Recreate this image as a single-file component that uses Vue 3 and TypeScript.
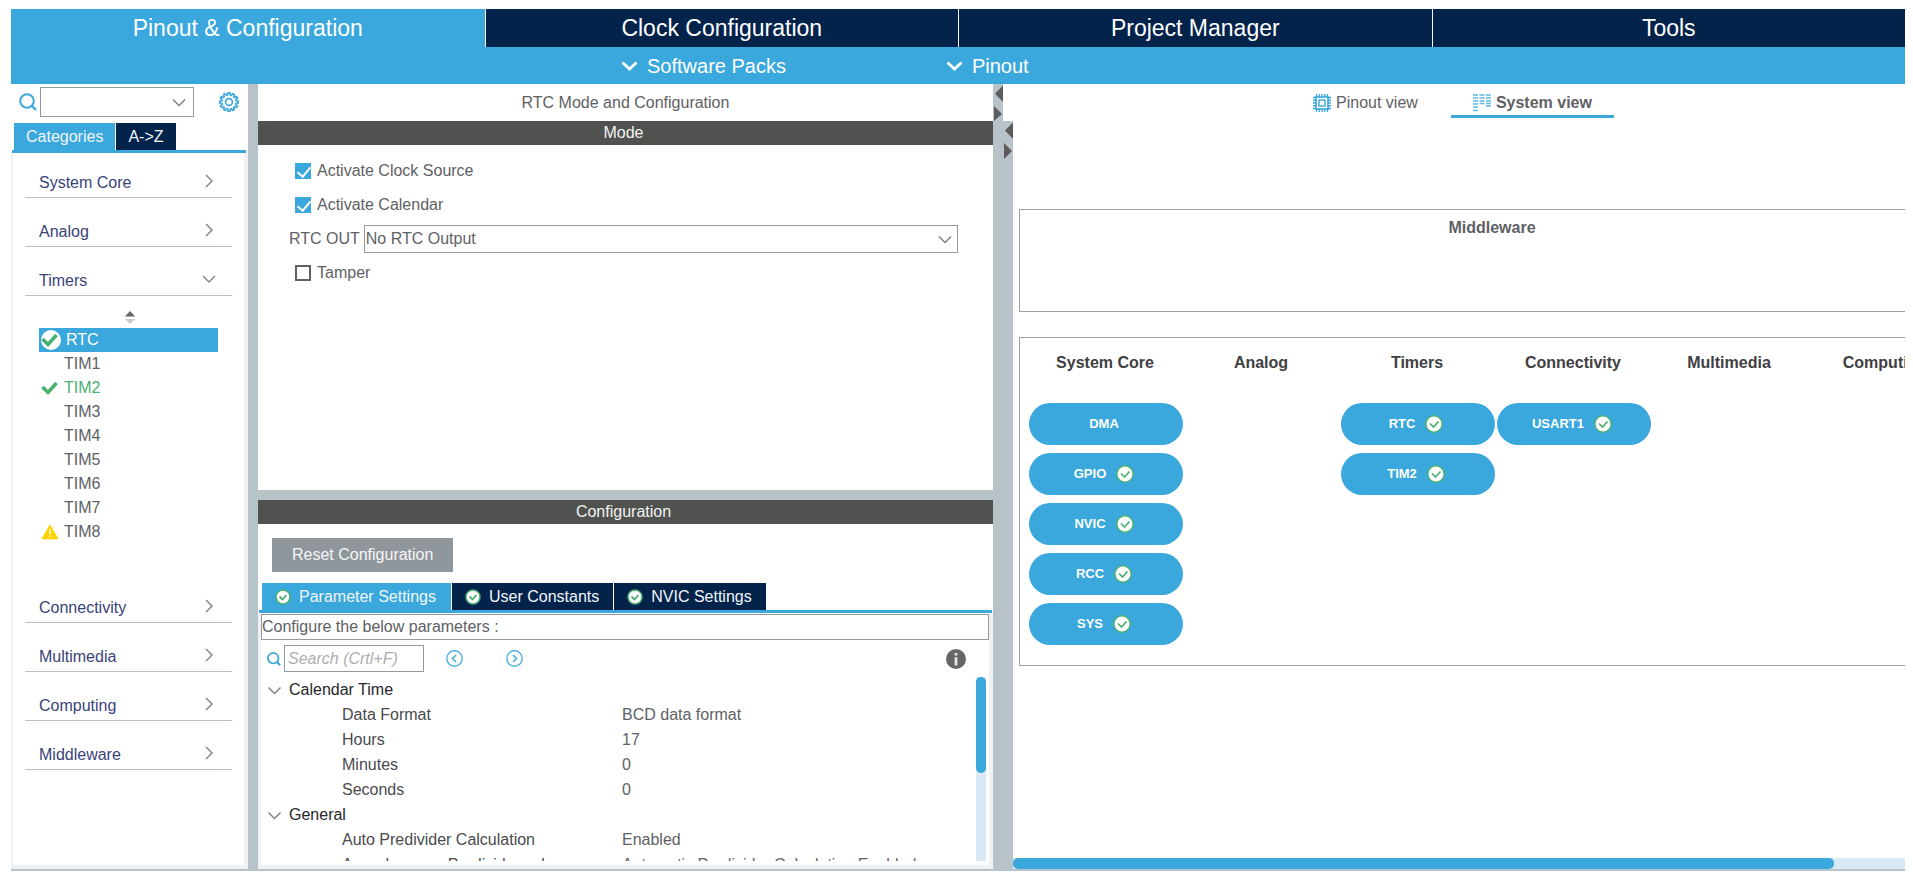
<script setup lang="ts">
import { ref } from 'vue'

type Status = 'ok' | 'warn' | ''

interface Peripheral {
  name: string
  status: Status
}

const mainTabs: string[] = ['Pinout & Configuration', 'Clock Configuration', 'Project Manager', 'Tools']
const activeMain = ref(0)

const timers: Peripheral[] = [
  { name: 'RTC', status: 'ok' },
  { name: 'TIM1', status: '' },
  { name: 'TIM2', status: 'ok' },
  { name: 'TIM3', status: '' },
  { name: 'TIM4', status: '' },
  { name: 'TIM5', status: '' },
  { name: 'TIM6', status: '' },
  { name: 'TIM7', status: '' },
  { name: 'TIM8', status: 'warn' },
]
const selected = ref('RTC')

const categories: { name: string; open: boolean }[] = [
  { name: 'System Core', open: false },
  { name: 'Analog', open: false },
  { name: 'Timers', open: true },
  { name: 'Connectivity', open: false },
  { name: 'Multimedia', open: false },
  { name: 'Computing', open: false },
  { name: 'Middleware', open: false },
]

const clockSource = ref(true)
const calendar = ref(true)
const tamper = ref(false)

const configTabs: string[] = ['Parameter Settings', 'User Constants', 'NVIC Settings']
const activeConfig = ref(0)

const groups: { title: string; rows: [string, string][] }[] = [
  {
    title: 'Calendar Time',
    rows: [
      ['Data Format', 'BCD data format'],
      ['Hours', '17'],
      ['Minutes', '0'],
      ['Seconds', '0'],
    ],
  },
  {
    title: 'General',
    rows: [
      ['Auto Predivider Calculation', 'Enabled'],
      ['Asynchronous Predivider value', 'Automatic Predivider Calculation Enabled'],
    ],
  },
]

const columns: { title: string; items: Peripheral[] }[] = [
  {
    title: 'System Core',
    items: [
      { name: 'DMA', status: '' },
      { name: 'GPIO', status: 'ok' },
      { name: 'NVIC', status: 'ok' },
      { name: 'RCC', status: 'ok' },
      { name: 'SYS', status: 'ok' },
    ],
  },
  { title: 'Analog', items: [] },
  {
    title: 'Timers',
    items: [
      { name: 'RTC', status: 'ok' },
      { name: 'TIM2', status: 'ok' },
    ],
  },
  { title: 'Connectivity', items: [{ name: 'USART1', status: 'ok' }] },
  { title: 'Multimedia', items: [] },
  { title: 'Computing', items: [] },
]

const gearPath = (() => {
  const points: string[] = []
  const teeth = 12
  for (let i = 0; i < teeth; i++) {
    const base = (i / teeth) * Math.PI * 2
    const step = (Math.PI * 2) / teeth
    const parts: [number, number][] = [[-0.32, 7.2], [-0.2, 9.3], [0.2, 9.3], [0.32, 7.2]]
    for (const [offset, radius] of parts) {
      const angle = base + offset * step
      points.push(`${(10 + radius * Math.cos(angle)).toFixed(2)} ${(10 + radius * Math.sin(angle)).toFixed(2)}`)
    }
  }
  return `M${points.join('L')}Z`
})()
</script>

<template>
  <div class="app">
    <header>
      <nav class="main-tabs">
        <button
          v-for="(tab, i) in mainTabs"
          :key="tab"
          :class="{ active: i === activeMain }"
          @click="activeMain = i"
        >{{ tab }}</button>
      </nav>
      <div class="sub-bar">
        <button v-for="menu in ['Software Packs', 'Pinout']" :key="menu">
          <svg width="17" height="10" viewBox="0 0 17 10"><path d="M1.5 1.5L8.500 8L15.500 1.500" fill="none" stroke="#fff" stroke-width="2.800" /></svg>
          {{ menu }}
        </button>
      </div>
    </header>

    <div class="workspace">
      <aside>
        <div class="finder">
          <svg width="18" height="18" viewBox="0 0 18 18"><circle cx="8" cy="8" r="6.800" fill="none" stroke="#3aa8dc" stroke-width="2" /><path d="M12.500 12.500L17 17" stroke="#3aa8dc" stroke-width="2.400" /></svg>
          <div class="select">
            <select aria-label="Find peripheral"><option></option></select>
            <svg width="14" height="9" viewBox="0 0 14 9"><path d="M1 1.500L7 7.500L13 1.500" fill="none" stroke="#808386" stroke-width="1.500" /></svg>
          </div>
          <button class="gear" aria-label="Settings">
            <svg width="20" height="20" viewBox="0 0 20 20"><path :d="gearPath" fill="none" stroke="#3aa8dc" stroke-width="1.600" /><circle cx="10" cy="10" r="3.400" fill="none" stroke="#3aa8dc" stroke-width="1.600" /></svg>
          </button>
        </div>
        <div class="tabs side-tabs">
          <button class="active">Categories</button>
          <button>A-&gt;Z</button>
        </div>
        <div class="categories">
          <template v-for="cat in categories" :key="cat.name">
            <button class="category">
              <span>{{ cat.name }}</span>
              <svg v-if="cat.open" width="14" height="14" viewBox="0 0 14 14"><path d="M1 4L7 10L13 4" fill="none" stroke="#87898c" stroke-width="1.500" /></svg>
              <svg v-else width="14" height="14" viewBox="0 0 14 14"><path d="M4 1L10 7L4 13" fill="none" stroke="#87898c" stroke-width="1.500" /></svg>
            </button>
            <div v-if="cat.open" class="sublist">
              <svg class="sort" width="12" height="13" viewBox="0 0 12 13"><path d="M1 5.500L6 0L11 5.500Z" fill="#666" /><path d="M1 8L6 13L11 8Z" fill="#ccc" /></svg>
              <ul>
                <li v-for="t in timers" :key="t.name">
                  <button
                    :class="{ selected: t.name === selected, enabled: t.status === 'ok' }"
                    @click="selected = t.name"
                  >
                    <span class="mark">
                      <svg v-if="t.status === 'ok'" width="20" height="20" viewBox="0 0 20 20">
                        <circle v-if="t.name === selected" cx="10" cy="10" r="10" fill="#fff" />
                        <path d="M1.500 9L7 14.500L15.500 5" fill="none" stroke="#49b170" stroke-width="3.600" />
                      </svg>
                      <svg v-else-if="t.status === 'warn'" width="20" height="20" viewBox="0 0 20 20"><path d="M9 3.500L16.500 16.500H1.500Z" fill="#ffd200" stroke="#ffd200" stroke-width="1.500" stroke-linejoin="round" /><path d="M9 7V12M9 13.300V15" stroke="#fff" stroke-width="1.300" /></svg>
                    </span>
                    {{ t.name }}
                  </button>
                </li>
              </ul>
            </div>
          </template>
        </div>
      </aside>

      <div class="splitter"></div>

      <main>
        <div class="title-row">
          <h1>RTC Mode and Configuration</h1>
          <div class="splitter arrows">
            <svg width="10" height="37" viewBox="0 0 10 37"><path d="M10 1.500V18L2 9.500Z" fill="#5c5c5c" /><path d="M1 22V37L9 30Z" fill="#5c5c5c" /></svg>
          </div>
          <div class="views">
            <button>
              <svg width="18" height="18" viewBox="0 0 18 18" fill="none" stroke="#3aa8dc">
                <path d="M3.500 0V3M6.250 0V3M9 0V3M11.750 0V3M14.500 0V3M3.500 15V18M6.250 15V18M9 15V18M11.750 15V18M14.500 15V18M0 3.500H3M0 6.250H3M0 9H3M0 11.750H3M0 14.500H3M15 3.500H18M15 6.250H18M15 9H18M15 11.750H18M15 14.500H18" stroke-width="1.300" />
                <rect x="3" y="3" width="12" height="12" stroke-width="1.600" />
                <rect x="6" y="6" width="6" height="6" stroke-width="1.400" />
              </svg>
              Pinout view
            </button>
            <button class="active">
              <svg width="18" height="18" viewBox="0 0 18 18" fill="none" stroke="#5fb8e3" stroke-width="1.500">
                <path d="M0 1H5M0 4H5M0 7H5M0 10H5M0 13H5M0 16.500H5M6.500 1H11.500M6.500 4H11.500M6.500 7H11.500M6.500 9.500H11.500M13 1H18M13 4H18M13 7H18M13 9.500H18M13 12H18" />
              </svg>
              System view
            </button>
          </div>
        </div>

        <div class="panes">
          <div class="center">
            <section class="mode">
              <h2>Mode</h2>
              <div class="mode-body">
                <label class="check"><input v-model="clockSource" type="checkbox" />Activate Clock Source</label>
                <label class="check"><input v-model="calendar" type="checkbox" />Activate Calendar</label>
                <div class="field">
                  <label for="rtc-out">RTC OUT</label>
                  <div class="select">
                    <select id="rtc-out"><option>No RTC Output</option></select>
                    <svg width="14" height="9" viewBox="0 0 14 9"><path d="M1 1.500L7 7.500L13 1.500" fill="none" stroke="#808386" stroke-width="1.500" /></svg>
                  </div>
                </div>
                <label class="check"><input v-model="tamper" type="checkbox" />Tamper</label>
              </div>
            </section>
            <div class="h-splitter"></div>
            <section class="config">
              <h2>Configuration</h2>
              <div class="reset-row"><button class="reset">Reset Configuration</button></div>
              <div class="tabs config-tabs">
                <button
                  v-for="(tab, i) in configTabs"
                  :key="tab"
                  :class="{ active: i === activeConfig }"
                  @click="activeConfig = i"
                >
                  <svg width="16" height="16" viewBox="0 0 16 16"><circle cx="8" cy="8" r="7" fill="#fff" stroke="#49b170" stroke-width="1.500" /><path d="M4.500 7.500L7.500 10.500L11.500 6" fill="none" stroke="#49b170" stroke-width="1.800" /></svg>
                  {{ tab }}
                </button>
              </div>
              <div class="sheet">
                <p>Configure the below parameters :</p>
                <div class="search-row">
                  <svg width="14" height="14" viewBox="0 0 18 18"><circle cx="8" cy="8" r="6.800" fill="none" stroke="#3aa8dc" stroke-width="2.200" /><path d="M12.500 12.500L17 17" stroke="#3aa8dc" stroke-width="2.700" /></svg>
                  <input type="text" aria-label="Search parameters" placeholder="Search (Crtl+F)" />
                  <button class="prev" aria-label="Previous match">
                    <svg width="17" height="17" viewBox="0 0 17 17" fill="none" stroke="#4fb1e0"><circle cx="8.500" cy="8.500" r="7.700" stroke-width="1.400" /><path d="M10 5L6.500 8.500L10 12" stroke-width="1.700" /></svg>
                  </button>
                  <button class="next" aria-label="Next match">
                    <svg width="17" height="17" viewBox="0 0 17 17" fill="none" stroke="#4fb1e0"><circle cx="8.500" cy="8.500" r="7.700" stroke-width="1.400" /><path d="M7 5L10.500 8.500L7 12" stroke-width="1.700" /></svg>
                  </button>
                  <button class="info" aria-label="Information">
                    <svg width="20" height="20" viewBox="0 0 20 20"><circle cx="10" cy="10" r="10" fill="#666" /><path d="M10 4V6.500M10 8.200V16.500" stroke="#e6e6e6" stroke-width="2.800" /></svg>
                  </button>
                </div>
                <div class="params">
                  <div class="viewport">
                    <table>
                      <tbody v-for="g in groups" :key="g.title">
                        <tr class="group">
                          <th colspan="2" scope="rowgroup">
                            <svg width="13" height="9" viewBox="0 0 13 9"><path d="M.5 1.500L6.500 7.500L12.500 1.500" fill="none" stroke="#808386" stroke-width="1.500" /></svg>{{ g.title }}
                          </th>
                        </tr>
                        <tr v-for="row in g.rows" :key="row[0]">
                          <th scope="row">{{ row[0] }}</th>
                          <td>{{ row[1] }}</td>
                        </tr>
                      </tbody>
                    </table>
                  </div>
                  <div class="v-scroll"><div></div></div>
                </div>
              </div>
            </section>
          </div>

          <div class="splitter wide arrows">
            <svg width="10" height="39" viewBox="0 0 10 39"><path d="M10 1.500V18L2 9.500Z" fill="#5c5c5c" /><path d="M1 22V38L9 30Z" fill="#5c5c5c" /></svg>
          </div>

          <section class="system">
            <div class="canvas">
              <div class="box middleware"><h3>Middleware</h3></div>
              <div class="box grid">
                <div v-for="col in columns" :key="col.title" class="column">
                  <h3>{{ col.title }}</h3>
                  <button v-for="item in col.items" :key="item.name" class="pill">
                    {{ item.name }}
                    <svg v-if="item.status === 'ok'" width="18" height="18" viewBox="0 0 18 18"><circle cx="9" cy="9" r="8.200" fill="#fff" stroke="#49b170" stroke-width="1.400" /><path d="M5 8.500L8.500 12L13.500 6.500" fill="none" stroke="#49b170" stroke-width="1.700" /></svg>
                  </button>
                </div>
              </div>
            </div>
            <div class="h-scroll"><div></div></div>
          </section>
        </div>
      </main>
    </div>
  </div>
</template>

<style>
body {
  margin: 0;
  background: #fff;
}
</style>

<style scoped>
* {
  box-sizing: border-box;
}

.app {
  display: flex;
  flex-direction: column;
  height: 100vh;
  padding: 9px 8px 6px 11px;
  overflow: hidden;
  font: 16px/20px "Liberation Sans", Arial, sans-serif;
  color: #606164;
}

button,
input,
select {
  margin: 0;
  padding: 0;
  border: 0;
  background: none;
  font: inherit;
  color: inherit;
}

svg {
  display: block;
  flex: none;
}

h1,
h2,
h3,
p,
ul {
  margin: 0;
  padding: 0;
  font-size: 16px;
  font-weight: 400;
  list-style: none;
}

header {
  flex: none;
  background: #3aa8dc;
}

.main-tabs {
  display: grid;
  grid-template-columns: repeat(4, 1fr);
  height: 38px;
}

.main-tabs button {
  border-left: 1px solid #fff;
  background: #03234b;
  color: #fff;
  font-size: 23px;
  line-height: 28px;
}

.main-tabs button:first-child {
  border-left: 0;
}

.main-tabs .active {
  background: #3aa8dc;
}

.sub-bar {
  display: flex;
  gap: 160px;
  height: 37px;
  padding-left: 610px;
}

.sub-bar button {
  display: flex;
  align-items: center;
  gap: 9px;
  color: #fff;
  font-size: 20px;
}

.workspace {
  display: flex;
  flex: 1;
  min-height: 0;
  border-bottom: 2px solid #b8c3c9;
}

aside {
  display: flex;
  flex-direction: column;
  width: 237px;
  flex: none;
}

.splitter {
  flex: none;
  width: 10px;
  background: #b8c3c9;
}

.wide {
  display: flex;
  justify-content: flex-end;
  width: 20px;
}

.finder {
  display: flex;
  align-items: center;
  height: 36px;
  padding-left: 8px;
}

.select {
  position: relative;
  display: flex;
  flex: 1;
}

.select select {
  flex: 1;
  width: 100%;
  height: 28px;
  padding: 0 24px 0 1px;
  border: 1px solid #93999e;
  border-radius: 0;
  appearance: none;
  background: #fff;
}

.select svg {
  position: absolute;
  top: 10px;
  right: 6px;
  pointer-events: none;
}

.finder .select {
  flex: none;
  width: 154px;
  margin: 0 25px 0 3px;
}

.finder select {
  height: 30px;
}

.finder .select svg {
  top: 11px;
  right: 8px;
}

.tabs {
  display: flex;
  flex: none;
  gap: 1px;
  border-bottom: 3px solid #3aa8dc;
}

.tabs button {
  display: flex;
  align-items: center;
  gap: 8px;
  height: 27px;
  background: #03234b;
  color: #f2f6fa;
}

.tabs .active {
  background: #3aa8dc;
}

.side-tabs {
  margin: 3px 2px 0 1px;
  padding-left: 2px;
}

.side-tabs button {
  padding: 0 12px;
}

.categories {
  display: flex;
  flex: 1;
  flex-direction: column;
  gap: 8px;
  padding: 4px 12px 0;
  border: solid #eff1f3;
  border-width: 0 4px 4px 2px;
}

.category {
  display: flex;
  flex: none;
  align-items: center;
  justify-content: space-between;
  height: 41px;
  padding: 12px 16px 0 14px;
  border-bottom: 1px solid #b8c3c9;
  color: #39437a;
}

.category svg {
  margin-bottom: 5px;
}

.sublist {
  padding: 7px 14px 30px;
}

.sort {
  margin: 0 85px 4px;
}

.sublist button {
  display: flex;
  align-items: center;
  gap: 3px;
  width: 100%;
  height: 24px;
  padding-left: 2px;
  text-align: left;
}

.mark {
  width: 20px;
}

.sublist .enabled {
  color: #49b170;
}

.sublist .selected {
  gap: 5px;
  background: #3aa8dc;
  color: #fff;
}

main {
  display: flex;
  flex: 1;
  flex-direction: column;
  min-width: 0;
}

.title-row {
  display: flex;
  flex: none;
  height: 37px;
}

.title-row h1 {
  width: 735px;
  line-height: 37px;
  text-align: center;
}

.views {
  display: flex;
  flex: 1;
  justify-content: center;
  gap: 14px;
}

.views button {
  display: flex;
  align-items: center;
  gap: 5px;
  height: 34px;
  padding: 6px 19px 0;
  border-bottom: 3px solid transparent;
}

.views .active {
  padding: 6px 22px 0;
  border-color: #3aa8dc;
  font-weight: 700;
}

.panes {
  display: flex;
  flex: 1;
  min-height: 0;
}

.center {
  display: flex;
  flex: none;
  flex-direction: column;
  width: 735px;
}

h2 {
  flex: none;
  height: 24px;
  padding-right: 4px;
  background: #50524f;
  color: #f2f2f2;
  line-height: 24px;
  text-align: center;
}

.mode {
  flex: none;
}

.mode-body {
  height: 345px;
  padding: 9px 35px 0 31px;
}

.check {
  display: flex;
  align-items: center;
  gap: 6px;
  height: 34px;
  padding-left: 6px;
}

.check input {
  width: 16px;
  height: 16px;
  border: 2px solid #606164;
  appearance: none;
}

.check input:checked {
  border: 0;
  background: #3aa8dc;
}

.check input:checked::after {
  display: block;
  width: 6px;
  height: 11px;
  margin: 1px 0 0 5px;
  border: solid #fff;
  border-width: 0 2px 2px 0;
  content: "";
  transform: rotate(40deg);
}

.field {
  display: flex;
  align-items: center;
  gap: 4px;
  height: 34px;
}

.h-splitter {
  flex: none;
  height: 10px;
  background: #b8c3c9;
}

.config {
  display: flex;
  flex: 1;
  flex-direction: column;
  min-height: 0;
}

.reset-row {
  flex: none;
  padding: 14px 14px 11px;
}

.reset {
  display: block;
  height: 34px;
  padding: 0 20px;
  background: #90979c;
  color: #f5f6f7;
}

.config-tabs {
  margin: 0 1px;
  padding-left: 3px;
}

.config-tabs button {
  padding: 0 14px 0 13px;
}

.config-tabs .active {
  padding: 0 15px 0 13px;
}

.sheet {
  display: flex;
  flex: 1;
  flex-direction: column;
  min-height: 0;
  padding: 1px 0 4px;
  border: solid #eff1f3;
  border-width: 0 4px 4px 3px;
}

.sheet p {
  flex: none;
  height: 26px;
  border: 1px solid #93999e;
  line-height: 24px;
}

.search-row {
  display: flex;
  flex: none;
  align-items: center;
  height: 37px;
  padding: 0 23px 0 6px;
}

.search-row input {
  width: 140px;
  height: 27px;
  margin: 0 22px 0 3px;
  padding: 0 3px;
  border: 1px solid #93999e;
}

.search-row input::placeholder {
  color: #acaeb0;
  font-style: italic;
  opacity: 1;
}

.next {
  margin-left: 43px;
}

.info {
  margin-left: auto;
}

.params {
  display: flex;
  flex: 1;
  min-height: 0;
  padding-right: 3px;
}

.viewport {
  flex: 1;
  overflow: hidden;
}

table {
  width: 100%;
  border-collapse: collapse;
  text-align: left;
}

th,
td {
  height: 25px;
  padding: 0;
  font-weight: 400;
  line-height: 25px;
}

tr th {
  width: 361px;
  padding-left: 81px;
  color: #4a4a4d;
}

.group th {
  padding-left: 7px;
  color: #262629;
}

.group svg {
  display: inline-block;
  margin-right: 8px;
}

.v-scroll {
  width: 10px;
  background: #d8e8f5;
}

.v-scroll div {
  height: 52%;
  border-radius: 5px;
  background: #3aa8dc;
}

.system {
  display: flex;
  flex: 1;
  flex-direction: column;
  min-width: 0;
}

.canvas {
  flex: 1;
  min-height: 0;
  padding: 88px 0 0 6px;
  overflow: hidden;
}

.box {
  width: 100%;
  min-width: 952px;
  border: 1px solid #9ba1a5;
}

h3 {
  font-weight: 700;
  text-align: center;
}

.middleware {
  height: 103px;
  margin-bottom: 25px;
  padding: 8px 6px 0 0;
}

.grid {
  display: grid;
  grid-template-columns: repeat(6, 1fr);
  min-height: 329px;
  padding: 15px 6px 20px 8px;
}

.column {
  display: flex;
  flex-direction: column;
  gap: 8px;
  padding: 0 1px;
}

.column h3 {
  margin-bottom: 22px;
  padding-right: 2px;
  color: #3f4043;
}

.pill {
  display: flex;
  align-items: center;
  justify-content: center;
  gap: 10px;
  height: 42px;
  padding-right: 4px;
  border-radius: 21px;
  background: #3aa8dc;
  color: #fff;
  font-size: 13px;
  font-weight: 700;
}

.h-scroll {
  flex: none;
  height: 11px;
  background: #d8e8f5;
}

.h-scroll div {
  width: 92%;
  height: 11px;
  border-radius: 5px;
  background: #3aa8dc;
}
</style>
